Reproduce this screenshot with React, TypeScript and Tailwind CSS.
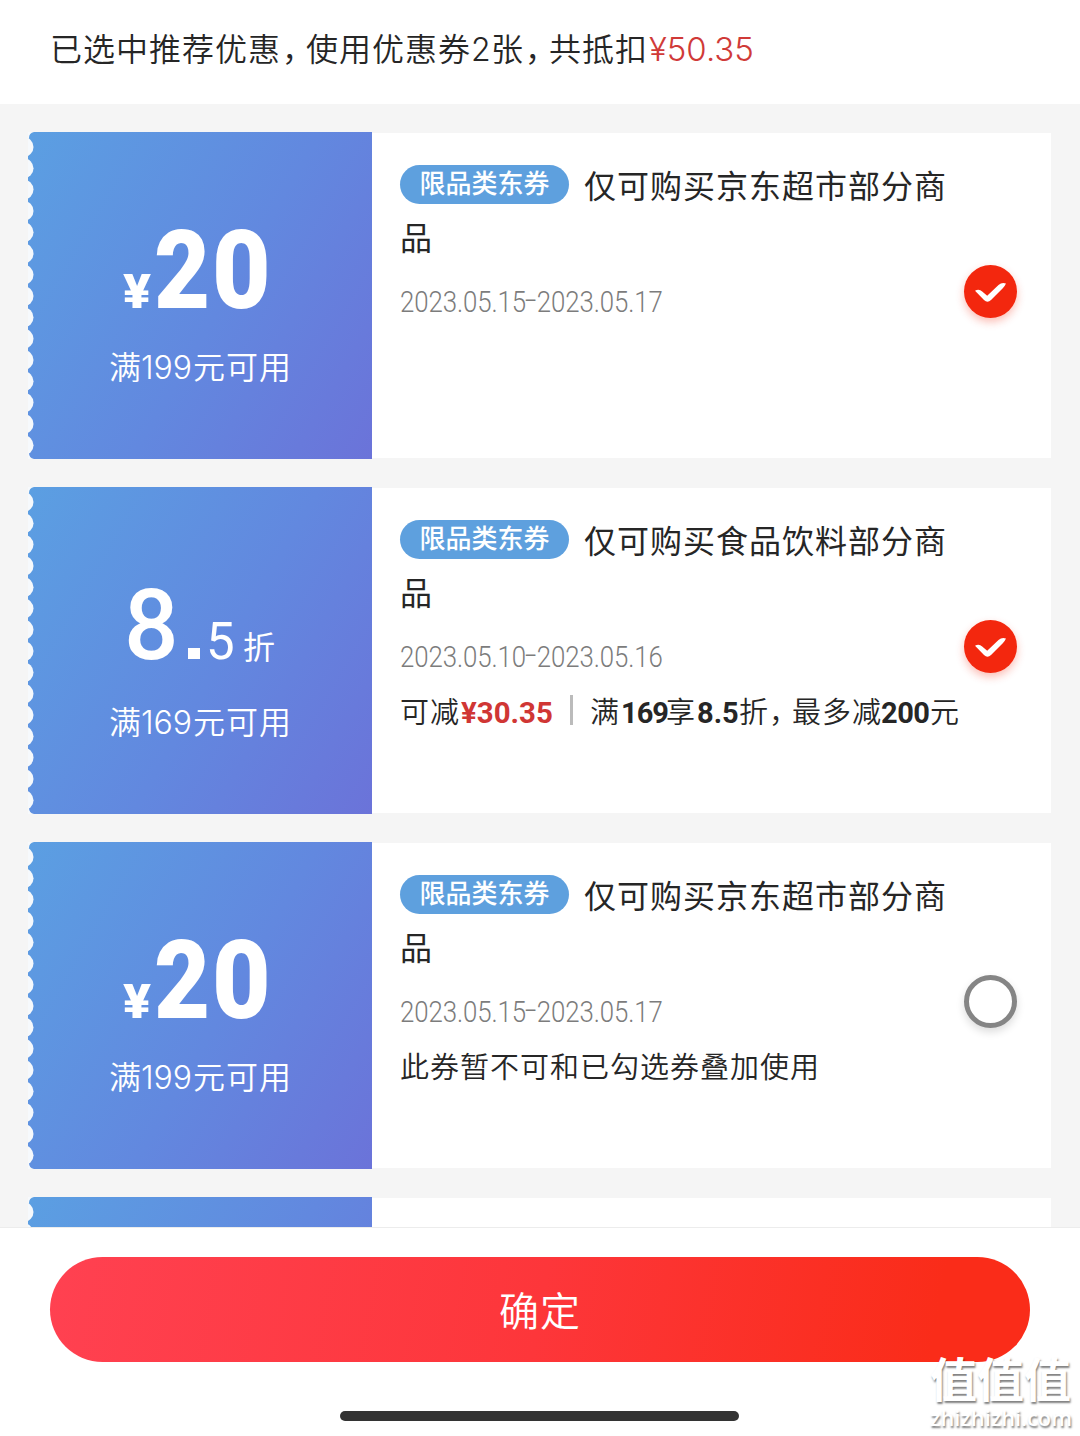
import React from "react";

type Coupon = {
  kind: "cash" | "discount";
  threshold: string;
  title: string;
  from: string;
  to: string;
  checked: boolean;
  note?: React.ReactNode;
};

const NOTCHES = Array.from({ length: 15 }, (_, i) => 15 + i * 21.3);

function TicketEdge() {
  return (
    <svg className="absolute left-0 top-0" width="8" height="327" viewBox="0 0 8 327" fill="#f6f9fc">
      <path d="M0 0H6Q1 1 1 6L0 8Z" />
      <path d="M0 327H6Q1 326 1 321L0 319Z" />
      {NOTCHES.map((y) => (
        <circle key={y} cx="-4.5" cy={y} r="10" />
      ))}
    </svg>
  );
}

function CashAmount() {
  return (
    <div className="flex h-[128px] items-baseline whitespace-nowrap pl-[95px] font-['Roboto'] font-black leading-[128px]">
      <span className="inline-block w-[31px] origin-left scale-x-[1.08] text-[48px]">¥</span>
      <span className="inline-block w-[58px] origin-left scale-x-[0.88] text-[110px]">2</span>
      <span className="inline-block w-[60px] origin-left scale-x-[0.92] text-[110px]">0</span>
    </div>
  );
}

function DiscountAmount() {
  return (
    <div className="flex h-[128px] items-baseline whitespace-nowrap pl-[96px] font-['Roboto'] font-medium leading-[128px]">
      <span className="inline-block w-[64px] origin-left scale-x-[0.98] text-[98px]">8</span>
      <span className="mr-[6px] h-[11px] w-[12px] bg-white" />
      <span className="inline-block w-[37px] origin-left text-[51px] font-normal">5</span>
      <span className="font-['Noto_Sans_CJK_SC'] text-[32px] font-normal">折</span>
    </div>
  );
}

function Ticket({ coupon }: { coupon: Coupon }) {
  return (
    <div className="relative h-[327px] w-[344px] shrink-0 bg-[linear-gradient(120deg,#5b9fe2_0%,#6288df_55%,#6b73d9_100%)] pt-[75px] text-white">
      <TicketEdge />
      {coupon.kind === "cash" ? <CashAmount /> : <DiscountAmount />}
      <div className="mt-[7px] flex h-[46px] items-baseline whitespace-nowrap pl-[81px] text-[32px] font-[350] leading-[46px]">
        <span className="inline-block w-[32px]">满</span>
        <span className="inline-block w-[52px] font-['Inter'] font-light">
          <span className="inline-block origin-left">{coupon.threshold}</span>
        </span>
        <span className="tracking-[1px]">元可用</span>
      </div>
    </div>
  );
}

function Check({ on }: { on: boolean }) {
  if (!on) {
    return (
      <span className="block size-[53px] rounded-full border-[5px] border-[#858585] bg-white shadow-[0_4px_8px_rgba(0,0,0,0.14)]" />
    );
  }
  return (
    <span className="block size-[53px] rounded-full bg-[#f3270e] shadow-[0_4px_8px_rgba(243,39,14,0.3)]">
      <svg width="53" height="53" viewBox="0 0 53 53" fill="#fff">
        <path d="M11 25.8Q15 23.6 18.2 26.5L23.2 30.8L34.5 20Q38 17 42 18.6Q41 21 38.8 23.2L27 35Q23.5 38.4 20 35Z" />
      </svg>
    </span>
  );
}

function CouponCard({ coupon }: { coupon: Coupon }) {
  return (
    <section className="flex h-[327px] w-[1023px] shrink-0 items-center">
      <Ticket coupon={coupon} />
      <div className="flex h-[325px] flex-1 bg-white">
        <div className="w-[592px] shrink-0 whitespace-nowrap pl-[28px] pt-[25px]">
          <div className="flex h-[52px] items-center">
            <span className="flex h-[39px] w-[169px] items-center justify-center rounded-full bg-[#5ea0de] pb-[4px] text-[26px] font-medium leading-none text-white">
              限品类东券
            </span>
            <span className="ml-[15px] text-[32px] leading-[52px] tracking-[1px]">{coupon.title}</span>
          </div>
          <div className="h-[52px] text-[32px] leading-[52px]">品</div>
          <div className="mt-[20px] flex h-[40px] origin-left scale-x-[0.86] font-['Roboto'] text-[30px] font-light leading-[40px] text-[#7c7c7c]">
            <span className="w-[145px] tracking-[-0.1px]">{coupon.from}</span>
            <span className="w-[14px] origin-left -translate-y-[2px] scale-x-[1.6]">-</span>
            <span className="tracking-[-0.1px]">{coupon.to}</span>
          </div>
          <div className="mt-[11px] flex h-[44px] items-baseline text-[29px] font-[350] leading-[44px] tracking-[1px]">
            {coupon.note}
          </div>
        </div>
        <div className="pt-[132px]">
          <Check on={coupon.checked} />
        </div>
      </div>
    </section>
  );
}

function DiscountNote() {
  return (
    <>
      <span className="inline-block w-[61px]">可减</span>
      <span className="inline-block w-[109px] font-['Roboto'] font-bold tracking-normal text-[#d03634]">
        <span className="inline-block origin-left scale-x-[0.98] text-[30px]">¥30.35</span>
      </span>
      <span className="mr-[17px] h-[30px] w-[3px] translate-y-[2px] bg-[#bbb]" />
      <span className="inline-block w-[31px]">满</span>
      <span className="inline-block w-[45px] font-['Roboto'] font-bold tracking-[-1px]">169</span>
      <span className="inline-block w-[31px]">享</span>
      <span className="inline-block w-[42px] font-['Roboto'] font-bold tracking-normal">8.5</span>
      <span className="inline-block w-[30px]">折</span>
      <span className="inline-block w-[23px] tracking-[-6px]">，</span>
      <span className="inline-block w-[89px]">最多减</span>
      <span className="inline-block w-[49px] font-['Roboto'] font-bold tracking-[-0.5px]">200</span>
      <span>元</span>
    </>
  );
}

const SUPERMARKET = "仅可购买京东超市部分商";

const COUPONS: Coupon[] = [
  { kind: "cash", threshold: "199", title: SUPERMARKET, from: "2023.05.15", to: "2023.05.17", checked: true },
  {
    kind: "discount",
    threshold: "169",
    title: "仅可购买食品饮料部分商",
    from: "2023.05.10",
    to: "2023.05.16",
    checked: true,
    note: <DiscountNote />,
  },
  {
    kind: "cash",
    threshold: "199",
    title: SUPERMARKET,
    from: "2023.05.15",
    to: "2023.05.17",
    checked: false,
    note: "此券暂不可和已勾选券叠加使用",
  },
];

function Watermark() {
  return (
    <div className="absolute right-[7px] top-[1342px] w-[143px] whitespace-nowrap text-white [text-shadow:1px_2px_2px_rgba(0,0,0,0.5)]">
      <div className="h-[64px] origin-top text-[47px] font-bold leading-[70px]">值值值</div>
      <div className="h-[24px] font-['Open_Sans'] text-[21.8px] font-semibold leading-[24px]">zhizhizhi.com</div>
    </div>
  );
}

export default function App() {
  return (
    <div className="relative flex h-[1436px] w-[1080px] flex-col overflow-hidden bg-white font-['Noto_Sans_CJK_SC',sans-serif] text-[#262626]">
      <header className="flex h-[104px] shrink-0 items-baseline whitespace-nowrap pl-[50px] pt-[23px] text-[32px] font-[350] leading-[48px] tracking-[1px]">
        <span className="inline-block w-[232px]">已选中推荐优惠</span>
        <span className="inline-block w-[24px] tracking-[-8px]">，</span>
        <span className="inline-block w-[165px]">使用优惠券</span>
        <span className="inline-block w-[20px] font-['Inter'] font-light">2</span>
        <span className="inline-block w-[34px]">张</span>
        <span className="inline-block w-[24px] tracking-[-8px]">，</span>
        <span className="inline-block w-[100px]">共抵扣</span>
        <span className="inline-block origin-left scale-x-[1.03] font-['Inter'] font-light tracking-normal text-[#d03a38]">
          ¥50.35
        </span>
      </header>
      <main className="flex h-[1123px] shrink-0 flex-col gap-[28px] overflow-hidden bg-[#f5f5f5] pl-[28px] pt-[28px]">
        {COUPONS.map((coupon, i) => (
          <CouponCard key={i} coupon={coupon} />
        ))}
        <section className="flex h-[327px] w-[1023px] shrink-0 items-center">
          <div className="relative h-[327px] w-[344px] bg-[linear-gradient(120deg,#5b9fe2_0%,#6288df_55%,#6b73d9_100%)]">
            <TicketEdge />
          </div>
          <div className="h-[325px] flex-1 bg-white" />
        </section>
      </main>
      <footer className="flex flex-1 flex-col items-center border-t border-[#ececec] bg-white pt-[29px]">
        <button className="h-[105px] w-[980px] shrink-0 rounded-full bg-[linear-gradient(100deg,#ff4151_0%,#fd363a_50%,#fa2c19_90%)] pb-[2px] text-[40px] font-[350] tracking-[1px] text-white">
          确定
        </button>
        <div className="mr-px mt-[49px] h-[10px] w-[399px] shrink-0 rounded-full bg-[#333]" />
      </footer>
      <Watermark />
    </div>
  );
}
